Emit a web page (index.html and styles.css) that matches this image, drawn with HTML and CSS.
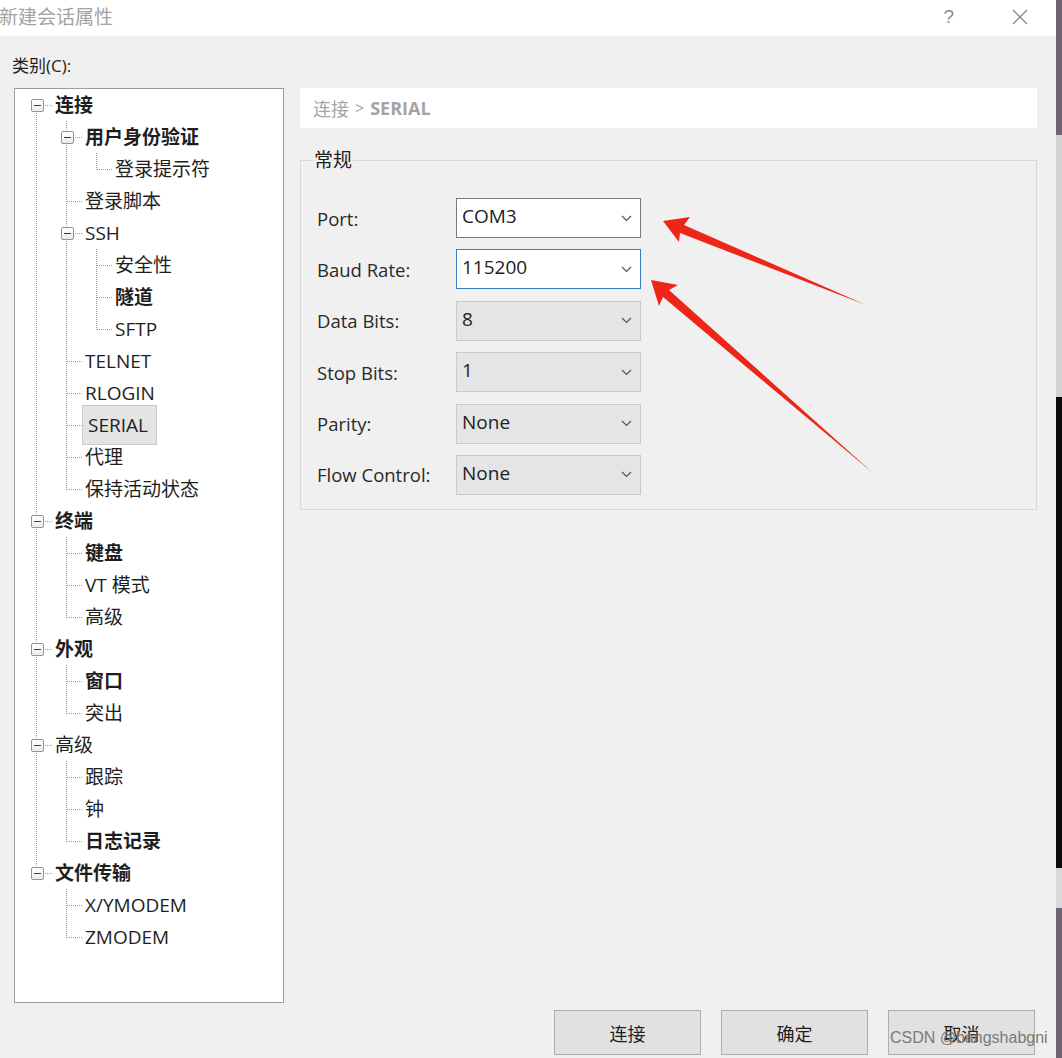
FILE: index.html
```html
<!DOCTYPE html>
<html lang="zh-CN">
<head>
<meta charset="utf-8">
<title>新建会话属性</title>
<link rel="stylesheet" href="styles.css">
</head>
<body>
<div class="screen">
  <div class="dialog">
    <div class="titlebar">
      <span class="title">新建会话属性</span>
      <div class="title-actions">
        <span class="help">?</span>
        <svg class="close" width="16" height="16" viewBox="0 0 16 16"><path d="M1 1 L15 15 M15 1 L1 15" stroke="#8a8a8a" stroke-width="1.3" fill="none"/></svg>
      </div>
    </div>
    <div class="content">
      <div class="cat-label">类别(C):</div>
      <div class="main">
        <div class="tree">
          <div class="row"><span class="c first"><span class="box"></span></span><span class="t b">连接</span></div>
          <div class="row"><span class="g"></span><span class="c mid"><span class="box"></span></span><span class="t b">用户身份验证</span></div>
          <div class="row"><span class="g"></span><span class="g"></span><span class="c last"></span><span class="t">登录提示符</span></div>
          <div class="row"><span class="g"></span><span class="c mid"></span><span class="t">登录脚本</span></div>
          <div class="row"><span class="g"></span><span class="c mid"><span class="box"></span></span><span class="t">SSH</span></div>
          <div class="row"><span class="g"></span><span class="g"></span><span class="c mid"></span><span class="t">安全性</span></div>
          <div class="row"><span class="g"></span><span class="g"></span><span class="c mid"></span><span class="t b">隧道</span></div>
          <div class="row"><span class="g"></span><span class="g"></span><span class="c last"></span><span class="t">SFTP</span></div>
          <div class="row"><span class="g"></span><span class="c mid"></span><span class="t">TELNET</span></div>
          <div class="row"><span class="g"></span><span class="c mid"></span><span class="t">RLOGIN</span></div>
          <div class="row"><span class="g"></span><span class="c mid"></span><span class="t sel">SERIAL</span></div>
          <div class="row"><span class="g"></span><span class="c mid"></span><span class="t">代理</span></div>
          <div class="row"><span class="g"></span><span class="c last"></span><span class="t">保持活动状态</span></div>
          <div class="row"><span class="c mid"><span class="box"></span></span><span class="t b">终端</span></div>
          <div class="row"><span class="g"></span><span class="c mid"></span><span class="t b">键盘</span></div>
          <div class="row"><span class="g"></span><span class="c mid"></span><span class="t">VT 模式</span></div>
          <div class="row"><span class="g"></span><span class="c last"></span><span class="t">高级</span></div>
          <div class="row"><span class="c mid"><span class="box"></span></span><span class="t b">外观</span></div>
          <div class="row"><span class="g"></span><span class="c mid"></span><span class="t b">窗口</span></div>
          <div class="row"><span class="g"></span><span class="c last"></span><span class="t">突出</span></div>
          <div class="row"><span class="c mid"><span class="box"></span></span><span class="t">高级</span></div>
          <div class="row"><span class="g"></span><span class="c mid"></span><span class="t">跟踪</span></div>
          <div class="row"><span class="g"></span><span class="c mid"></span><span class="t">钟</span></div>
          <div class="row"><span class="g"></span><span class="c last"></span><span class="t b">日志记录</span></div>
          <div class="row"><span class="c last"><span class="box"></span></span><span class="t b">文件传输</span></div>
          <div class="row"><span class="gb"></span><span class="c mid"></span><span class="t">X/YMODEM</span></div>
          <div class="row"><span class="gb"></span><span class="c last"></span><span class="t">ZMODEM</span></div>
        </div>
        <div class="panel">
          <div class="crumb"><span class="crumb-a">连接</span><span class="crumb-sep">&gt;</span><span class="crumb-b">SERIAL</span></div>
          <fieldset class="group">
            <legend>常规</legend>
            <div class="form">
              <label class="lbl">Port:</label>
              <div class="sel white"><span>COM3</span><svg class="chev" width="11" height="7" viewBox="0 0 11 7"><path d="M1 1 L5.5 5.5 L10 1" stroke="#555" stroke-width="1.2" fill="none"/></svg></div>
              <label class="lbl">Baud Rate:</label>
              <div class="sel focus"><span>115200</span><svg class="chev" width="11" height="7" viewBox="0 0 11 7"><path d="M1 1 L5.5 5.5 L10 1" stroke="#555" stroke-width="1.2" fill="none"/></svg></div>
              <label class="lbl">Data Bits:</label>
              <div class="sel"><span>8</span><svg class="chev" width="11" height="7" viewBox="0 0 11 7"><path d="M1 1 L5.5 5.5 L10 1" stroke="#555" stroke-width="1.2" fill="none"/></svg></div>
              <label class="lbl">Stop Bits:</label>
              <div class="sel"><span>1</span><svg class="chev" width="11" height="7" viewBox="0 0 11 7"><path d="M1 1 L5.5 5.5 L10 1" stroke="#555" stroke-width="1.2" fill="none"/></svg></div>
              <label class="lbl">Parity:</label>
              <div class="sel"><span>None</span><svg class="chev" width="11" height="7" viewBox="0 0 11 7"><path d="M1 1 L5.5 5.5 L10 1" stroke="#555" stroke-width="1.2" fill="none"/></svg></div>
              <label class="lbl">Flow Control:</label>
              <div class="sel"><span>None</span><svg class="chev" width="11" height="7" viewBox="0 0 11 7"><path d="M1 1 L5.5 5.5 L10 1" stroke="#555" stroke-width="1.2" fill="none"/></svg></div>
            </div>
          </fieldset>
        </div>
      </div>
      <div class="buttons">
        <button class="btn">连接</button>
        <button class="btn">确定</button>
        <button class="btn">取消</button>
      </div>
    </div>
  </div>
  <div class="desk">
    <div class="d1"></div>
    <div class="d2"></div>
    <div class="d3"></div>
    <div class="d4"></div>
    <div class="d5"></div>
  </div>
  <svg class="arrows" width="1062" height="1058" viewBox="0 0 1062 1058">
    <polygon points="663,221 690,217 684,225 866,305 680,233 679,242" fill="#ee2519"/>
    <polygon points="651,280 678,285 669,290 873,473 663,297 659,306" fill="#ee2519"/>
  </svg>
  <div class="watermark">CSDN @bangshabgni</div>
</div>
</body>
</html>
```

FILE: styles.css
```css
* { box-sizing: border-box; }
html, body { margin: 0; padding: 0; }
body {
  font-family: "Open Sans", "Noto Sans CJK SC", sans-serif;
  color: #1e1e1e;
  background: #f0f0f0;
}
.screen {
  position: relative;
  display: flex;
  width: 1062px;
  height: 1058px;
  overflow: hidden;
}
.dialog {
  width: 1056px;
  height: 1058px;
  background: #f0f0f0;
  display: flex;
  flex-direction: column;
}
.titlebar {
  height: 36px;
  background: #fff;
  display: flex;
  align-items: center;
  justify-content: space-between;
  padding: 0 0 3px 0;
}
.title {
  font-size: 19px;
  color: #a3a3a3;
  margin-left: -1px;
  line-height: 26px;
}
.title-actions {
  display: flex;
  align-items: center;
  gap: 58px;
  padding-right: 28px;
}
.help {
  font-family: "Liberation Sans", sans-serif;
  font-size: 19px;
  color: #8c8c8c;
  line-height: 20px;
}
.content {
  flex: 1;
  padding: 18px 0 0 12px;
  display: flex;
  flex-direction: column;
}
.cat-label {
  font-size: 17px;
  line-height: 24px;
  color: #1e1e1e;
  margin-bottom: 10px;
}
.main {
  display: flex;
  gap: 16px;
}
.tree {
  width: 270px;
  height: 915px;
  margin-left: 2px;
  background: #fff;
  border: 1px solid #9d9d9d;
  padding: 0 0 0 7px;
}
.row {
  display: flex;
  align-items: center;
  height: 32px;
}
.g, .gb, .c {
  width: 30px;
  height: 32px;
  flex: none;
  background-repeat: no-repeat;
}
.g {
  background-image: repeating-linear-gradient(to bottom, #9a9a9a 0 1px, transparent 1px 2px);
  background-size: 1px 32px;
  background-position: 14px 0;
}
.c {
  display: flex;
  align-items: center;
  justify-content: center;
  background-image:
    repeating-linear-gradient(to bottom, #9a9a9a 0 1px, transparent 1px 2px),
    repeating-linear-gradient(to right, #9a9a9a 0 1px, transparent 1px 2px);
  background-size: 1px 32px, 16px 1px;
  background-position: 14px 0, 15px 16px;
}
.c.last {
  background-size: 1px 17px, 16px 1px;
}
.c.first {
  background-size: 1px 16px, 16px 1px;
  background-position: 14px 16px, 15px 16px;
}
.box {
  width: 13px;
  height: 13px;
  border: 1px solid #929292;
  border-radius: 2px;
  background: linear-gradient(#3c3c3c, #3c3c3c) center / 7px 1px no-repeat, linear-gradient(#ffffff, #ececec);
}
.t {
  font-size: 19px;
  line-height: 30px;
  padding: 0 3px;
  color: #1e1e1e;
  white-space: nowrap;
}
.t.b { font-weight: 700; }
.t.sel { background: #e4e4e4; }
.panel {
  width: 737px;
  display: flex;
  flex-direction: column;
}
.crumb {
  height: 40px;
  background: #fff;
  display: flex;
  align-items: center;
  padding-left: 13px;
  gap: 6px;
  color: #a4a4a4;
  font-size: 18px;
}
.crumb-b { font-weight: 700; }
.crumb-sep { font-size: 16px; }
.group {
  margin: 20px 0 0 0;
  border: 1px solid #d9d9d9;
  padding: 0 0 14px 12px;
  min-width: 0;
}
.group legend {
  font-size: 19px;
  line-height: 24px;
  padding: 0 1px;
  color: #1e1e1e;
}
.form {
  display: grid;
  grid-template-columns: 139px 185px;
  grid-auto-rows: 40px;
  row-gap: 11.4px;
  margin-top: 26px;
  padding-left: 4px;
  align-items: center;
}
.lbl {
  font-size: 18.5px;
  color: #2a2a2a;
}
.sel {
  height: 40px;
  border: 1px solid #cacaca;
  background: #e5e5e5;
  display: flex;
  align-items: center;
  justify-content: space-between;
  padding: 0 8px 0 5px;
  font-size: 19px;
  color: #222;
}
.sel span { line-height: 26px; margin-top: -4px; }
.sel.white { background: #fff; border-color: #7a7a7a; }
.sel.focus { background: #fff; border-color: #3b7dc4; }
.chev { flex: none; }
.buttons {
  display: flex;
  justify-content: flex-end;
  gap: 20px;
  padding-right: 21px;
  margin-top: 7px;
}
.btn {
  width: 147px;
  height: 45px;
  background: #e1e1e1;
  border: 1px solid #adadad;
  font-family: "Noto Sans CJK SC", sans-serif;
  font-size: 18px;
  color: #1e1e1e;
  padding: 0;
}
.desk {
  width: 6px;
  display: flex;
  flex-direction: column;
}
.d1 { height: 135px; background: #6d6373; }
.d2 { height: 262px; background: #d3d3d3; }
.d3 { height: 471px; background: #0b0b0b; }
.d4 { height: 40px; background: #d9d9d9; }
.d5 { flex: 1; background: #6d6373; }
.arrows {
  position: absolute;
  left: 0;
  top: 0;
  pointer-events: none;
}
.watermark {
  position: absolute;
  left: 890px;
  top: 1029px;
  font-family: "Liberation Sans", sans-serif;
  font-size: 16px;
  color: #7a7a7a;
  white-space: nowrap;
}
```
